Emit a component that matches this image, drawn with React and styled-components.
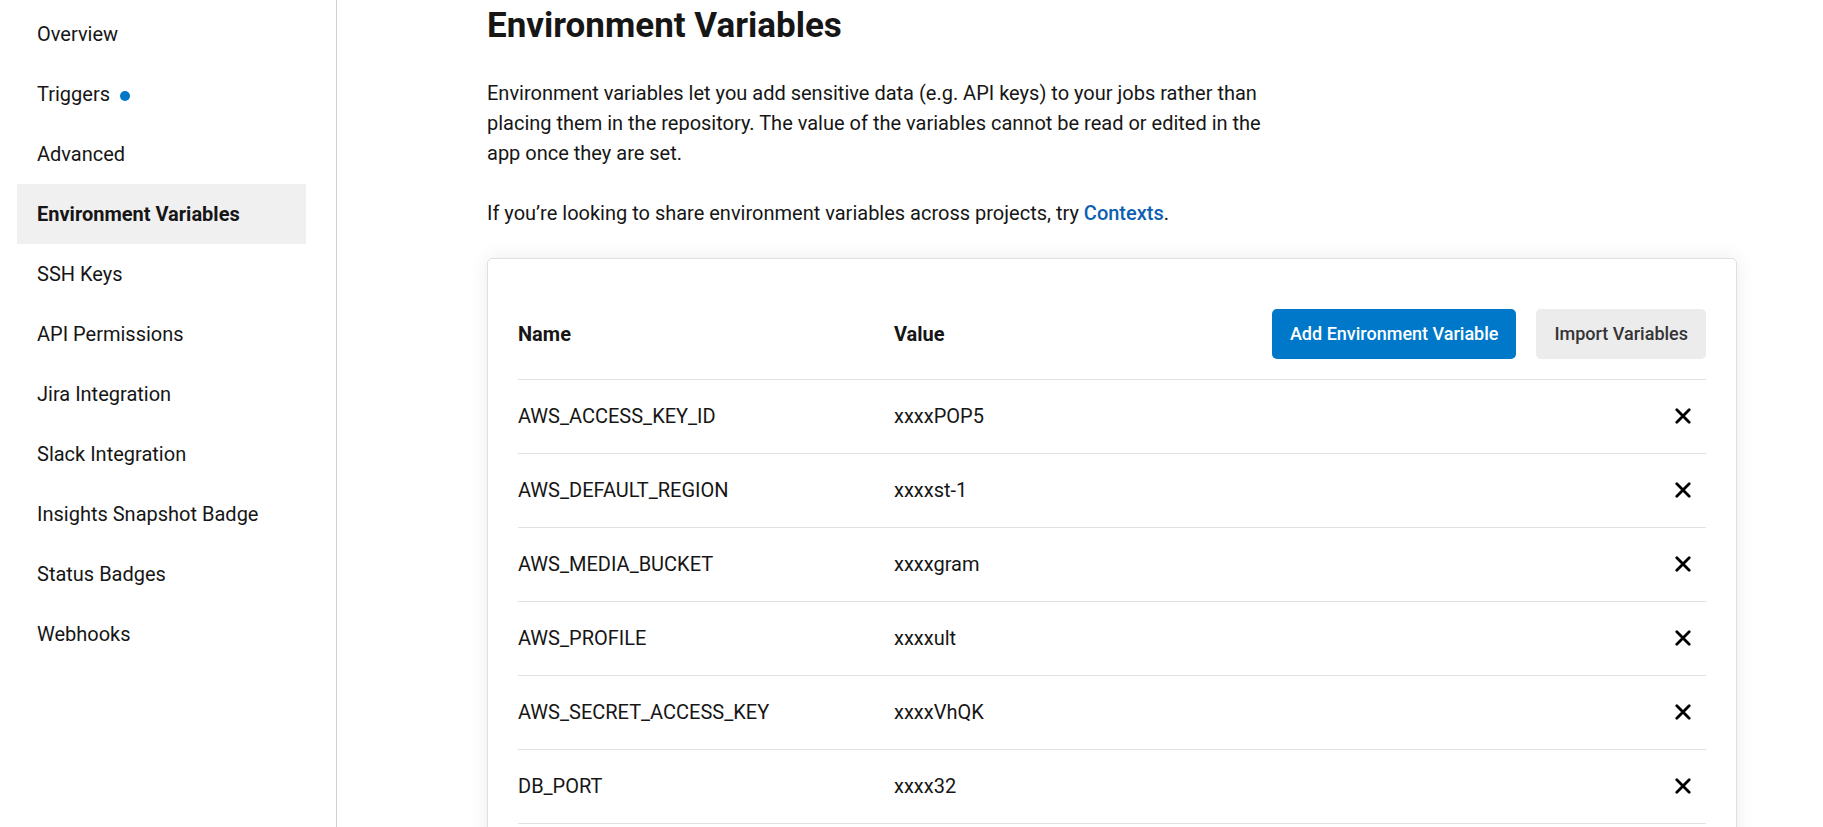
import React from "react";
import styled, { createGlobalStyle } from "styled-components";

const GlobalStyle = createGlobalStyle`
  *, *::before, *::after { box-sizing: border-box; }
  body {
    margin: 0;
    background: #fff;
    color: #161616;
    font-family: Roboto, "Liberation Sans", sans-serif;
    font-size: 20px;
    line-height: 30px;
  }
`;

const Page = styled.div`
  display: flex;
  min-height: 100vh;
`;

const Sidebar = styled.nav`
  flex: none;
  width: 337px;
  padding: 4px 30px 0 17px;
  border-right: 1px solid #d0d0d0;
`;

const NavList = styled.ul`
  margin: 0;
  padding: 0;
  list-style: none;
`;

const NavLink = styled.a`
  display: flex;
  align-items: center;
  gap: 10px;
  height: 60px;
  padding: 0 20px;
  color: inherit;
  text-decoration: none;
  font-weight: ${({ $active }) => ($active ? 700 : 400)};
  background: ${({ $active }) => ($active ? "#f0f0f0" : "transparent")};
`;

const Dot = styled.span`
  width: 10px;
  height: 10px;
  margin-top: 4px;
  border-radius: 50%;
  background: #0078ca;
`;

const Main = styled.main`
  flex: 1;
  min-width: 0;
  padding: 0 86px 0 150px;
`;

const Title = styled.h1`
  margin: 0 0 26px;
  font-size: 35px;
  line-height: 52px;
  font-weight: 700;
`;

const Text = styled.p`
  max-width: 800px;
  margin: 0 0 30px;
`;

const TextLink = styled.a`
  color: #0d5fb3;
  font-weight: 500;
  text-decoration: none;
`;

const Card = styled.section`
  padding: 30px;
  border: 1px solid #e0e0e0;
  border-radius: 5px;
  background: #fff;
  box-shadow: 0 0 20px rgba(0, 0, 0, 0.08);
`;

const Table = styled.table`
  width: 100%;
  table-layout: fixed;
  border-spacing: 0;
`;

const HeadCell = styled.th`
  width: ${({ $width }) => $width || "auto"};
  height: 91px;
  padding: 0;
  border-bottom: 1px solid #e0e0e0;
  text-align: left;
  font-weight: 700;
`;

const Cell = styled.td`
  height: 74px;
  padding: 0 0 1px;
  border-bottom: 1px solid #e0e0e0;
  text-align: ${({ $align }) => $align || "left"};
`;

const Actions = styled.div`
  display: flex;
  justify-content: flex-end;
  gap: 20px;
`;

const Button = styled.button`
  height: 50px;
  padding: 0 18px;
  border: 0;
  border-radius: 5px;
  font: inherit;
  font-size: 18px;
  font-weight: 500;
  white-space: nowrap;
  cursor: pointer;
  color: ${({ $primary }) => ($primary ? "#fff" : "#343434")};
  background: ${({ $primary }) => ($primary ? "#0078ca" : "#ececec")};
`;

const RemoveButton = styled.button`
  display: inline-flex;
  align-items: center;
  justify-content: center;
  width: 46px;
  height: 40px;
  padding: 0;
  border: 0;
  background: none;
  color: #000;
  cursor: pointer;
  vertical-align: middle;
`;

const navItems = [
  { label: "Overview" },
  { label: "Triggers", dot: true },
  { label: "Advanced" },
  { label: "Environment Variables", active: true },
  { label: "SSH Keys" },
  { label: "API Permissions" },
  { label: "Jira Integration" },
  { label: "Slack Integration" },
  { label: "Insights Snapshot Badge" },
  { label: "Status Badges" },
  { label: "Webhooks" },
];

const variables = [
  ["AWS_ACCESS_KEY_ID", "xxxxPOP5"],
  ["AWS_DEFAULT_REGION", "xxxxst-1"],
  ["AWS_MEDIA_BUCKET", "xxxxgram"],
  ["AWS_PROFILE", "xxxxult"],
  ["AWS_SECRET_ACCESS_KEY", "xxxxVhQK"],
  ["DB_PORT", "xxxx32"],
];

function CrossIcon() {
  return (
    <svg width="16" height="16" viewBox="0 0 16 16" fill="none" aria-hidden="true">
      <path d="M1.8 1.8 14.2 14.2M14.2 1.8 1.8 14.2" stroke="currentColor" strokeWidth="2.8" strokeLinecap="round" />
    </svg>
  );
}

export default function App() {
  return (
    <>
      <GlobalStyle />
      <Page>
        <Sidebar aria-label="Project settings">
          <NavList>
            {navItems.map(({ label, dot, active }) => (
              <li key={label}>
                <NavLink href="#" $active={active} aria-current={active ? "page" : undefined}>
                  {label}
                  {dot && <Dot />}
                </NavLink>
              </li>
            ))}
          </NavList>
        </Sidebar>
        <Main>
          <Title>Environment Variables</Title>
          <Text>
            Environment variables let you add sensitive data (e.g. API keys) to your jobs rather than
            placing them in the repository. The value of the variables cannot be read or edited in the
            app once they are set.
          </Text>
          <Text>
            If you’re looking to share environment variables across projects, try{" "}
            <TextLink href="#">Contexts</TextLink>.
          </Text>
          <Card>
            <Table>
              <thead>
                <tr>
                  <HeadCell scope="col" $width="376px">Name</HeadCell>
                  <HeadCell scope="col" $width="300px">Value</HeadCell>
                  <HeadCell as="td">
                    <Actions>
                      <Button type="button" $primary>Add Environment Variable</Button>
                      <Button type="button">Import Variables</Button>
                    </Actions>
                  </HeadCell>
                </tr>
              </thead>
              <tbody>
                {variables.map(([name, value]) => (
                  <tr key={name}>
                    <Cell>{name}</Cell>
                    <Cell>{value}</Cell>
                    <Cell $align="right">
                      <RemoveButton type="button" aria-label={`Remove ${name}`}>
                        <CrossIcon />
                      </RemoveButton>
                    </Cell>
                  </tr>
                ))}
              </tbody>
            </Table>
          </Card>
        </Main>
      </Page>
    </>
  );
}
